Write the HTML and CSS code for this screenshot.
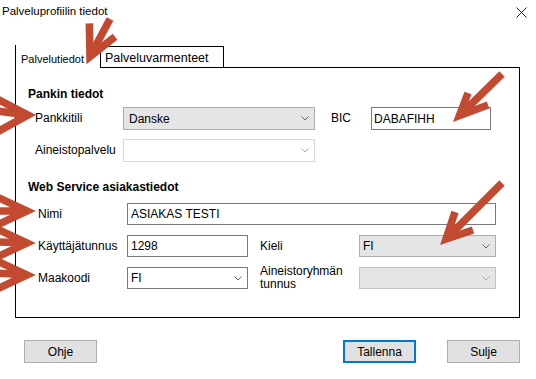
FILE: index.html
```html
<!DOCTYPE html>
<html lang="fi">
<head>
    <meta charset="UTF-8">
    <meta name="viewport" content="width=device-width, initial-scale=1.0">
    <title>Palveluprofiilin tiedot</title>
    <link rel="stylesheet" href="styles.css">
</head>
<body>
    <div class="dialog">
        <div class="titlebar">
            <span class="title">Palveluprofiilin tiedot</span>
            <svg class="close" width="11" height="11" viewBox="0 0 11 11">
                <path d="M0.5 0.5 L10.5 10.5 M10.5 0.5 L0.5 10.5" stroke="#222" stroke-width="1" fill="none"/>
            </svg>
        </div>

        <div class="tabs">
            <div class="tab active">Palvelutiedot</div>
            <div class="tab">Palveluvarmenteet</div>
            <div class="tab-fill"></div>
        </div>

        <div class="panel">
            <div class="section-title">Pankin tiedot</div>
            <div class="bank-grid">
                <label>Pankkitili</label>
                <div class="combo gray">
                    <span>Danske</span>
                    <svg class="chevron" width="8" height="5" viewBox="0 0 8 5"><path d="M0.5 0.5 L4 4 L7.5 0.5"/></svg>
                </div>
                <label class="bic">BIC</label>
                <div class="field bic-field">DABAFIHH</div>

                <label>Aineistopalvelu</label>
                <div class="combo disabled">
                    <span></span>
                    <svg class="chevron" width="8" height="5" viewBox="0 0 8 5"><path d="M0.5 0.5 L4 4 L7.5 0.5"/></svg>
                </div>
            </div>

            <div class="section-title second">Web Service asiakastiedot</div>
            <div class="ws-grid">
                <label>Nimi</label>
                <div class="field wide">ASIAKAS TESTI</div>

                <label>Käyttäjätunnus</label>
                <div class="field">1298</div>
                <label class="right-label">Kieli</label>
                <div class="combo gray ws">
                    <span>FI</span>
                    <svg class="chevron" width="8" height="5" viewBox="0 0 8 5"><path d="M0.5 0.5 L4 4 L7.5 0.5"/></svg>
                </div>

                <label>Maakoodi</label>
                <div class="combo white ws">
                    <span>FI</span>
                    <svg class="chevron" width="8" height="5" viewBox="0 0 8 5"><path d="M0.5 0.5 L4 4 L7.5 0.5"/></svg>
                </div>
                <label class="right-label">Aineistoryhmän<br>tunnus</label>
                <div class="combo gray ws light">
                    <span></span>
                    <svg class="chevron" width="8" height="5" viewBox="0 0 8 5"><path d="M0.5 0.5 L4 4 L7.5 0.5"/></svg>
                </div>
            </div>
        </div>

        <div class="buttons">
            <button class="btn">Ohje</button>
            <div class="spacer"></div>
            <button class="btn default">Tallenna</button>
            <button class="btn">Sulje</button>
        </div>
    </div>

    <!-- red annotation arrows drawn over the dialog -->
    <svg class="arrows" width="536" height="379" viewBox="0 0 536 379">
        <g stroke="#c24a31" stroke-width="7.5" fill="none" stroke-linejoin="miter" stroke-miterlimit="10">
            <path d="M110 19 L90 56.5"/>
            <path d="M89.3 23.3 L90 56.5 L115 36.7"/>

            <path d="M-3 111 L28 115"/>
            <path d="M-3 99 L28 115 L-3 132"/>

            <path d="M502 74 L459.4 115.7"/>
            <path d="M468 93 L459.4 115.7 L488 105"/>

            <path d="M-3 211 L27 211"/>
            <path d="M-3 197 L27 211 L-3 225"/>

            <path d="M-3 242 L27 243"/>
            <path d="M-3 229 L27 243 L-3 257"/>

            <path d="M-3 273 L27 275"/>
            <path d="M-3 261 L27 275 L-3 289"/>

            <path d="M502 183 L446 239"/>
            <path d="M455 212 L446 239 L473 230"/>
        </g>
    </svg>
</body>
</html>
```

FILE: styles.css
```css
body {
    margin: 0;
    width: 536px;
    height: 379px;
    position: relative;
    background-color: #fff;
    font-family: "Liberation Sans", Arial, sans-serif;
    font-size: 12px;
    color: #000;
    overflow: hidden;
}

.titlebar {
    height: 45px;
    display: flex;
    justify-content: space-between;
    align-items: flex-start;
}

.title {
    font-size: 11.5px;
    line-height: 16px;
    padding: 3px 0 0 2px;
}

.close {
    margin: 7px 9px 0 0;
}

/* tab strip */
.tabs {
    display: flex;
    align-items: flex-end;
    margin-left: 15px;
    width: 505px;
    height: 23px;
}

.tab {
    box-sizing: border-box;
    height: 22px;
    width: 124px;
    padding: 4px 0 0 4px;
    border: 1px solid #000;
    font-size: 12.5px;
    line-height: 15px;
}

.tab.active {
    height: 23px;
    width: 85px;
    border: none;
    border-left: 1px solid #000;
    padding: 8px 0 0 5px;
    font-size: 11px;
    line-height: 13px;
}

.tab-fill {
    flex: 1;
    border-bottom: 1px solid #000;
}

.panel {
    box-sizing: border-box;
    margin-left: 15px;
    width: 505px;
    height: 250px;
    border: 1px solid #000;
    border-top: none;
    padding: 19px 0 0 12px;
}

.section-title {
    font-weight: bold;
    line-height: 14px;
}

.section-title.second {
    margin-top: 18px;
}

label {
    display: flex;
    align-items: center;
    line-height: 13px;
}

.bank-grid {
    display: grid;
    grid-template-columns: 88px 192px 56px 120px;
    grid-auto-rows: 23px;
    row-gap: 9px;
    margin-top: 6px;
    padding-left: 7px;
}

.bank-grid .bic {
    padding-left: 16px;
}

.ws-grid {
    display: grid;
    grid-template-columns: 89px 121px 111px 137px;
    grid-auto-rows: 22px;
    row-gap: 10px;
    margin-top: 9px;
    padding-left: 10px;
}

.ws-grid .wide {
    grid-column: 2 / 5;
}

.ws-grid .right-label {
    padding-left: 12px;
}

.field {
    box-sizing: border-box;
    border: 1px solid #7a7a7a;
    background-color: #fff;
    padding-left: 3px;
    display: flex;
    align-items: center;
}

.bic-field {
    padding-left: 2px;
}

.combo {
    box-sizing: border-box;
    display: flex;
    align-items: center;
    justify-content: space-between;
    border: 1px solid #adadad;
    padding: 0 5px 0 5px;
}

.combo.ws {
    padding-left: 3px;
}

.combo.gray {
    background-color: #e5e5e5;
}

.combo.light {
    border-color: #c4c4c4;
}

.combo.white {
    background-color: #fff;
    border-color: #7a7a7a;
}

.combo.disabled {
    background-color: #fff;
    border-color: #d9d9d9;
}

.chevron path {
    fill: none;
    stroke: #666;
    stroke-width: 1;
}

.combo.disabled .chevron path,
.combo.light .chevron path {
    stroke: #a8a8a8;
}

/* bottom buttons */
.buttons {
    display: flex;
    margin-top: 22px;
    padding: 0 16px 0 24px;
}

.spacer {
    flex: 1;
}

.btn {
    box-sizing: border-box;
    width: 73px;
    height: 23px;
    background-color: #e1e1e1;
    border: 1px solid #adadad;
    border-radius: 0;
    font-family: "Liberation Sans", Arial, sans-serif;
    font-size: 12px;
    color: #000;
    padding: 0;
}

.btn.default {
    border: 2px solid #0078d7;
    margin-right: 31px;
}

.arrows {
    position: absolute;
    top: 0;
    left: 0;
    pointer-events: none;
}
```
